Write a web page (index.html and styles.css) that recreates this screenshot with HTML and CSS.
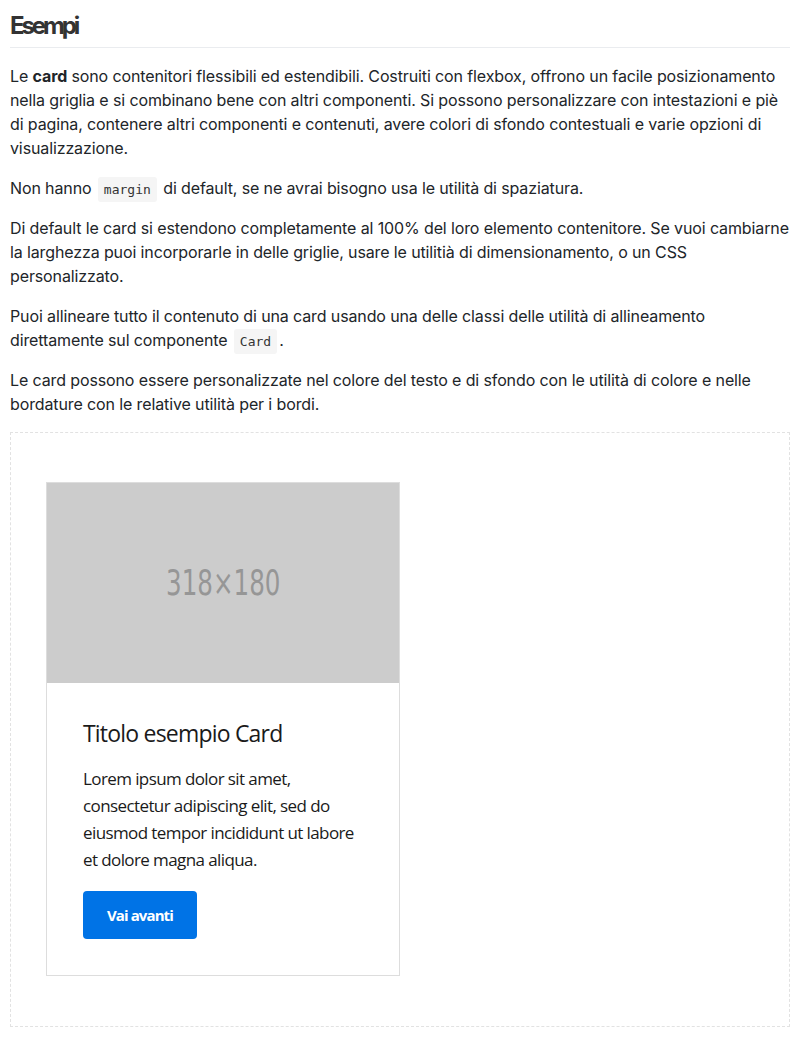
FILE: index.html
```html
<!DOCTYPE html>
<html lang="it">
<head>
<meta charset="utf-8">
<title>Esempi</title>
<link rel="stylesheet" href="styles.css">
</head>
<body>
<main class="doc">
  <h2 class="doc-title">Esempi</h2>
  <p>Le <strong>card</strong> sono contenitori flessibili ed estendibili. Costruiti con flexbox, offrono un facile posizionamento nella griglia e si combinano bene con altri componenti. Si possono personalizzare con intestazioni e piè di pagina, contenere altri componenti e contenuti, avere colori di sfondo contestuali e varie opzioni di visualizzazione.</p>
  <p>Non hanno <code>margin</code> di default, se ne avrai bisogno usa le utilità di spaziatura.</p>
  <p>Di default le card si estendono completamente al 100% del loro elemento contenitore. Se vuoi cambiarne la larghezza puoi incorporarle in delle griglie, usare le utilitià di dimensionamento, o un CSS personalizzato.</p>
  <p>Puoi allineare tutto il contenuto di una card usando una delle classi delle utilità di allineamento direttamente sul componente <code>Card</code>.</p>
  <p>Le card possono essere personalizzate nel colore del testo e di sfondo con le utilità di colore e nelle bordature con le relative utilità per i bordi.</p>

  <div class="example">
    <div class="card">
      <div class="card-img"><span>318×180</span></div>
      <div class="card-body">
        <h5 class="card-title">Titolo esempio Card</h5>
        <p class="card-text">Lorem ipsum dolor sit amet, consectetur adipiscing elit, sed do eiusmod tempor incididunt ut labore et dolore magna aliqua.</p>
        <a class="btn" href="#">Vai avanti</a>
      </div>
    </div>
  </div>
</main>
</body>
</html>
```

FILE: styles.css
```css
* { box-sizing: border-box; }

body {
  margin: 0;
  background: #fff;
  color: #212529;
  font-family: Inter, "Liberation Sans", sans-serif;
  font-size: 16px;
  line-height: 24px;
}

.doc {
  padding: 0 10px;
  letter-spacing: -0.12px;
}

.doc-title {
  margin: 0;
  padding: 12px 0 7px;
  font-size: 24px;
  line-height: 28px;
  font-weight: 700;
  letter-spacing: -3.1px;
  color: #333;
  border-bottom: 1px solid #eaecef;
}

.doc p {
  margin: 16px 0 0;
}

.doc code {
  font-family: "DejaVu Sans Mono", monospace;
  font-size: 13px;
  line-height: 1;
  letter-spacing: 0;
  background: #f5f5f5;
  border-radius: 3px;
  padding: 5px 6px;
  margin: 0 2px;
  color: #333;
}

.example {
  margin-top: 16px;
  border: 1px dashed #e2e2e2;
  padding: 49px 35px 50px;
}

.card {
  width: 354px;
  border: 1px solid #ddd;
  background: #fff;
  letter-spacing: 0;
}

.card-img {
  height: 200px;
  background: #ccc;
  display: flex;
  align-items: center;
  justify-content: center;
}

.card-img span {
  font-family: "DejaVu Sans", sans-serif;
  font-stretch: condensed;
  font-size: 35px;
  color: #969696;
  display: inline-block;
  transform: scaleX(0.78);
}

.card-body {
  padding: 34px 36px 36px;
  font-family: "Open Sans", sans-serif;
  color: #1a1a1a;
}

.card-title {
  margin: 0;
  font-size: 23px;
  line-height: 32px;
  font-weight: 400;
  letter-spacing: -0.8px;
}

.doc .card-text {
  margin: 16px 0 0;
  font-size: 17px;
  line-height: 27px;
  letter-spacing: -0.6px;
}

.btn {
  display: inline-block;
  margin-top: 18px;
  background: #0073e6;
  color: #fff;
  font-weight: 700;
  font-size: 15px;
  line-height: 48px;
  padding: 0 24px;
  border-radius: 4px;
  text-decoration: none;
  letter-spacing: -0.9px;
}
```
